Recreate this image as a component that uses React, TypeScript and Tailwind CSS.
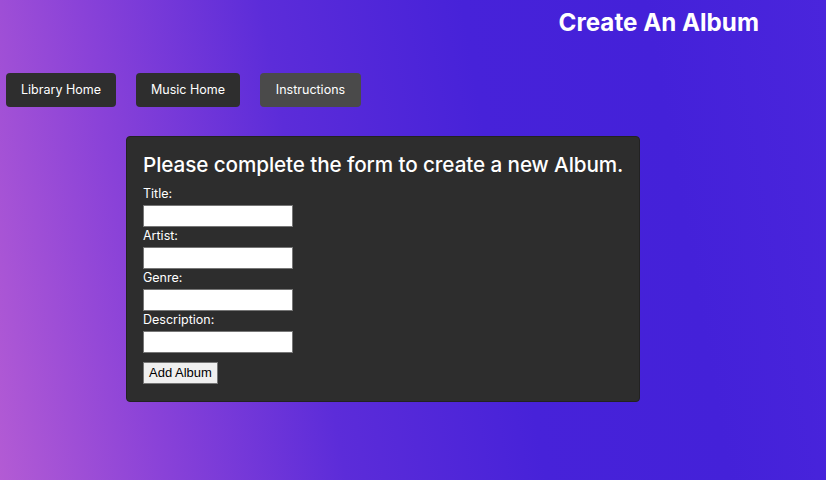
import React from "react";

const NAV = [
  { label: "Library Home", w: "w-[110px]", bg: "bg-[#2e2e2e]" },
  { label: "Music Home", w: "w-[104px]", bg: "bg-[#2e2e2e]" },
  { label: "Instructions", w: "w-[101px]", bg: "bg-[#4a4a4a]" },
];

const FIELDS = ["Title:", "Artist:", "Genre:", "Description:"];

export default function App() {
  return (
    <div className="w-[826px] h-[480px] overflow-hidden bg-[linear-gradient(80deg,#b35bd4_0%,#8a42d8_18%,#5c2cd9_38%,#4722d9_60%,#4421d9_80%,#4a25dc_100%)] font-['Inter','Liberation_Sans',sans-serif] text-white">
      {/* Header */}
      <header className="flex justify-end pr-[67px] pt-[8px] h-[40px]">
        <h1 className="text-[24.2px] font-bold leading-[30px]">
          Create An Album
        </h1>
      </header>

      {/* Nav */}
      <nav className="flex gap-[20px] pl-[6px] mt-[33px]">
        {NAV.map((n) => (
          <button
            key={n.label}
            className={`${n.w} ${n.bg} h-[34px] rounded-[4px] text-[12.5px] text-white`}
          >
            {n.label}
          </button>
        ))}
      </nav>

      {/* Form panel */}
      <div className="ml-[126px] mt-[29px] w-[514px] h-[266px] rounded-[4px] border border-[#222] bg-[#2d2d2d] px-[16px] pt-[14px]">
        <h2 className="text-[20.7px] font-medium leading-[28px] whitespace-nowrap tracking-[-0.1px]">
          Please complete the form to create a new Album.
        </h2>
        <form className="mt-[6px] flex flex-col">
          {FIELDS.map((f) => (
            <div key={f} className="flex flex-col">
              <label className="text-[12.5px] leading-[15px] mt-[1px] mb-[4px]">{f}</label>
              <input
                type="text"
                className="w-[150px] h-[22px] bg-white border border-[#767676] text-black text-[13px]"
              />
            </div>
          ))}
          <div className="mt-[6px]">
            <button
              type="button"
              className="h-[22px] px-[5px] bg-[#efefef] border border-[#767676] text-black text-[13px] leading-[18px] font-['Liberation_Sans',sans-serif]"
            >
              Add Album
            </button>
          </div>
        </form>
      </div>
    </div>
  );
}
